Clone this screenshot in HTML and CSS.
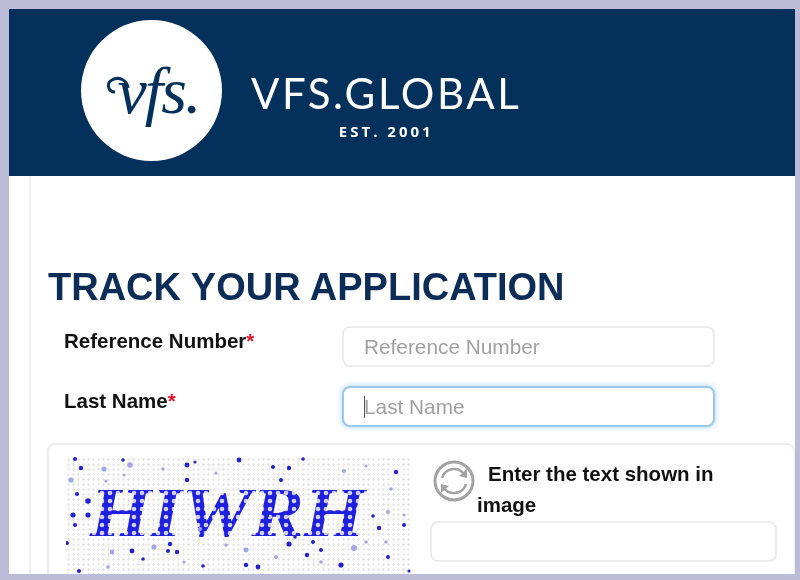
FILE: index.html
```html
<html>
<head>
<meta charset="UTF-8">
<title>Track Your Application - VFS Global</title>
<link rel="stylesheet" href="styles.css">
</head>
<body>
<div class="frame">
    <div class="header">
        <div class="logo_circle">
            <span class="logo_text">vfs.</span>
            <svg class="logo_swash" width="141" height="141" viewBox="0 0 141 141">
                <path d="M34 72 C27 72 25 63 31 60 C38 56 46 60 47 68" fill="none" stroke="#03315c" stroke-width="3"></path>
            </svg>
        </div>
        <div class="wordmark">
            <div class="brand">VFS.GLOBAL</div>
            <div class="est">EST. 2001</div>
        </div>
    </div>

    <div class="content">
        <h1>TRACK YOUR APPLICATION</h1>

        <div class="form_row">
            <label>Reference Number<span class="req">*</span></label>
            <input type="text" placeholder="Reference Number">
        </div>
        <div class="form_row">
            <label>Last Name<span class="req">*</span></label>
            <div class="fake_input focused"><span class="caret"></span>Last Name</div>
        </div>

        <div class="captcha_panel">
            <div class="captcha_image">
                <svg width="346" height="120" viewBox="0 0 346 120">
                    <defs>
                        <pattern id="beads" width="8" height="8" patternUnits="userSpaceOnUse">
                            <rect width="8" height="8" fill="#1f1fe0"></rect>
                            <circle cx="4" cy="4" r="2.3" fill="#d0d0f8"></circle>
                        </pattern>
                    </defs>
                    <text class="captcha_text" x="24" y="79" textLength="275" lengthAdjust="spacingAndGlyphs" fill="url(#beads)">HIWRH</text>
                    <g fill="#2222cc">
                        <circle cx="9" cy="2" r="2"></circle><circle cx="15" cy="11" r="2.2"></circle>
                        <circle cx="57" cy="3" r="1.8"></circle><circle cx="121" cy="8" r="2.4"></circle>
                        <circle cx="129" cy="5" r="1.6"></circle><circle cx="173" cy="3" r="2.4"></circle>
                        <circle cx="207" cy="10" r="2"></circle><circle cx="223" cy="11" r="2.2"></circle>
                        <circle cx="237" cy="2" r="1.8"></circle><circle cx="330" cy="15" r="2.2"></circle>
                        <circle cx="121" cy="23" r="2.2"></circle><circle cx="215" cy="23" r="2"></circle>
                        <circle cx="11" cy="37" r="2"></circle><circle cx="22" cy="44" r="2.8"></circle>
                        <circle cx="7" cy="58" r="2.6"></circle><circle cx="22" cy="58" r="2.6"></circle>
                        <circle cx="9" cy="68" r="2"></circle><circle cx="1" cy="86" r="2"></circle>
                        <circle cx="338" cy="68" r="2"></circle><circle cx="313" cy="71" r="2.2"></circle>
                        <circle cx="307" cy="59" r="1.8"></circle><circle cx="66" cy="94" r="2.4"></circle>
                        <circle cx="104" cy="87" r="2.2"></circle><circle cx="102" cy="94" r="2"></circle>
                        <circle cx="111" cy="95" r="2.2"></circle><circle cx="223" cy="87" r="2.6"></circle>
                        <circle cx="247" cy="85" r="2"></circle><circle cx="255" cy="93" r="2"></circle>
                        <circle cx="322" cy="100" r="2"></circle><circle cx="241" cy="98" r="2.2"></circle>
                        <circle cx="77" cy="102" r="1.8"></circle><circle cx="180" cy="108" r="2.2"></circle>
                        <circle cx="192" cy="110" r="2.4"></circle><circle cx="275" cy="108" r="2.6"></circle>
                        <circle cx="13" cy="114" r="2"></circle><circle cx="137" cy="109" r="1.8"></circle>
                        <circle cx="229" cy="80" r="1.8"></circle><circle cx="201" cy="59" r="2"></circle>
                        <circle cx="343" cy="114" r="1.6"></circle>
                    </g>
                    <g fill="#a5a5e4">
                        <circle cx="38" cy="12" r="2.6"></circle><circle cx="64" cy="8" r="2.8"></circle>
                        <circle cx="40" cy="24" r="1.6"></circle><circle cx="97" cy="12" r="1.8"></circle>
                        <circle cx="150" cy="16" r="1.6"></circle><circle cx="278" cy="14" r="2"></circle>
                        <circle cx="5" cy="23" r="2.6"></circle><circle cx="58" cy="18" r="1.6"></circle>
                        <circle cx="325" cy="32" r="1.8"></circle><circle cx="300" cy="9" r="1.6"></circle>
                        <circle cx="322" cy="55" r="2"></circle><circle cx="338" cy="58" r="1.6"></circle>
                        <circle cx="134" cy="72" r="2"></circle><circle cx="160" cy="88" r="1.8"></circle>
                        <circle cx="46" cy="95" r="2.4"></circle><circle cx="88" cy="90" r="2.6"></circle>
                        <circle cx="180" cy="93" r="2.4"></circle><circle cx="288" cy="91" r="3"></circle>
                        <circle cx="320" cy="85" r="1.8"></circle><circle cx="300" cy="85" r="1.8"></circle>
                        <circle cx="210" cy="100" r="2"></circle><circle cx="255" cy="105" r="1.8"></circle>
                        <circle cx="42" cy="110" r="1.8"></circle><circle cx="118" cy="105" r="1.6"></circle>
                    </g>
                </svg>
            </div>
            <div class="captcha_side">
                <div class="captcha_prompt">
                    <svg class="refresh" width="42" height="42" viewBox="0 0 42 42">
                        <circle cx="21" cy="21" r="19" fill="none" stroke="#a3a3a3" stroke-width="3"></circle>
                        <path d="M9 18 A12.5 12.5 0 0 1 31 14" fill="none" stroke="#a3a3a3" stroke-width="2.6"></path>
                        <path d="M33 24 A12.5 12.5 0 0 1 11 28" fill="none" stroke="#a3a3a3" stroke-width="2.6"></path>
                        <path d="M34 9 L34 18 L26 16 Z" fill="#a3a3a3"></path>
                        <path d="M8 33 L8 24 L16 26 Z" fill="#a3a3a3"></path>
                    </svg>
                    <span class="prompt_text">Enter the text shown in image</span>
                </div>
                <input type="text" class="captcha_input">
            </div>
        </div>
    </div>
</div>
</body>
</html>
```

FILE: styles.css
```css
* {
    box-sizing: border-box;
}

html, body {
    height: 100%;
}

body {
    margin: 0;
    padding: 9px 5px 6px 9px;
    background: #bcbcd8;
    font-family: "Liberation Sans", Arial, sans-serif;
    overflow: hidden;
}

.frame {
    height: 100%;
    background: white;
    overflow: hidden;
    filter: blur(0.5px);
}

.header {
    height: 167px;
    background: #03315c;
    display: flex;
    align-items: flex-start;
    padding: 11px 0 0 72px;
    color: white;
}

.logo_circle {
    position: relative;
    width: 141px;
    height: 141px;
    border-radius: 50%;
    background: white;
    display: flex;
    align-items: center;
    justify-content: center;
}

.logo_text {
    font-family: "Liberation Serif", serif;
    font-style: italic;
    font-size: 66px;
    letter-spacing: -2px;
    color: #03315c;
    line-height: 1;
    margin: 0 0 0 14px;
}

.logo_swash {
    position: absolute;
    top: 0;
    left: 0;
}

.wordmark {
    margin: 50px 0 0 29px;
    text-align: center;
}

.brand {
    font-family: Lato, sans-serif;
    font-size: 42px;
    line-height: 46px;
    letter-spacing: 2.6px;
}

.est {
    font-family: "Open Sans", sans-serif;
    font-size: 15px;
    font-weight: 700;
    letter-spacing: 3px;
    line-height: 20px;
    margin-top: 5px;
}

.content {
    margin-left: 20px;
    height: 100%;
    border-left: 2px solid #eeeeee;
    padding: 88px 0 0 16px;
}

h1 {
    margin: 0 0 16px 1px;
    font-size: 38px;
    line-height: 46px;
    font-weight: bold;
    color: #0c2d58;
}

.form_row {
    display: grid;
    grid-template-columns: 278px 373px;
    padding-left: 17px;
    margin-bottom: 19px;
}

label {
    font-size: 20.5px;
    font-weight: bold;
    color: #111;
    line-height: 30px;
}

.req {
    color: #e8102a;
}

input, .fake_input {
    height: 41px;
    border: 2px solid #ececec;
    border-radius: 8px;
    padding: 0 20px;
    font-family: "Liberation Sans", Arial, sans-serif;
    font-size: 20.8px;
    background: white;
    outline: none;
}

input::placeholder {
    color: #a0a0a0;
}

.fake_input {
    color: #a0a0a0;
    display: flex;
    align-items: center;
}

.fake_input.focused {
    border-color: #9cc8ea;
    box-shadow: 0 0 6px #a9d4f2;
}

.caret {
    width: 1px;
    height: 22px;
    background: #555;
    margin-right: -1px;
}

.captcha_panel {
    display: flex;
    height: 200px;
    margin-top: -3px;
    border: 2px solid #ececec;
    border-right-width: 1px;
    border-radius: 8px 8px 0 0;
    padding: 12px 17px 0 17px;
}

.captcha_image {
    width: 346px;
    height: 120px;
    flex: none;
    background-color: #fdfdfd;
    background-image: radial-gradient(#e8e8e8 1px, transparent 1.4px);
    background-size: 5px 5px;
}

.captcha_image svg {
    display: block;
}

.captcha_text {
    font-family: "Liberation Serif", serif;
    font-style: italic;
    font-weight: bold;
    font-size: 70px;
}

.captcha_side {
    width: 348px;
    margin-left: 18px;
}

.captcha_prompt {
    height: 64px;
    padding-top: 1px;
    font-size: 20.5px;
    font-weight: bold;
    line-height: 31px;
    color: #111;
}

.refresh {
    float: left;
    margin: 2px 2px 0 3px;
}

.prompt_text {
    display: block;
    text-indent: 11px;
}

.captcha_input {
    display: block;
    width: 100%;
}
```
